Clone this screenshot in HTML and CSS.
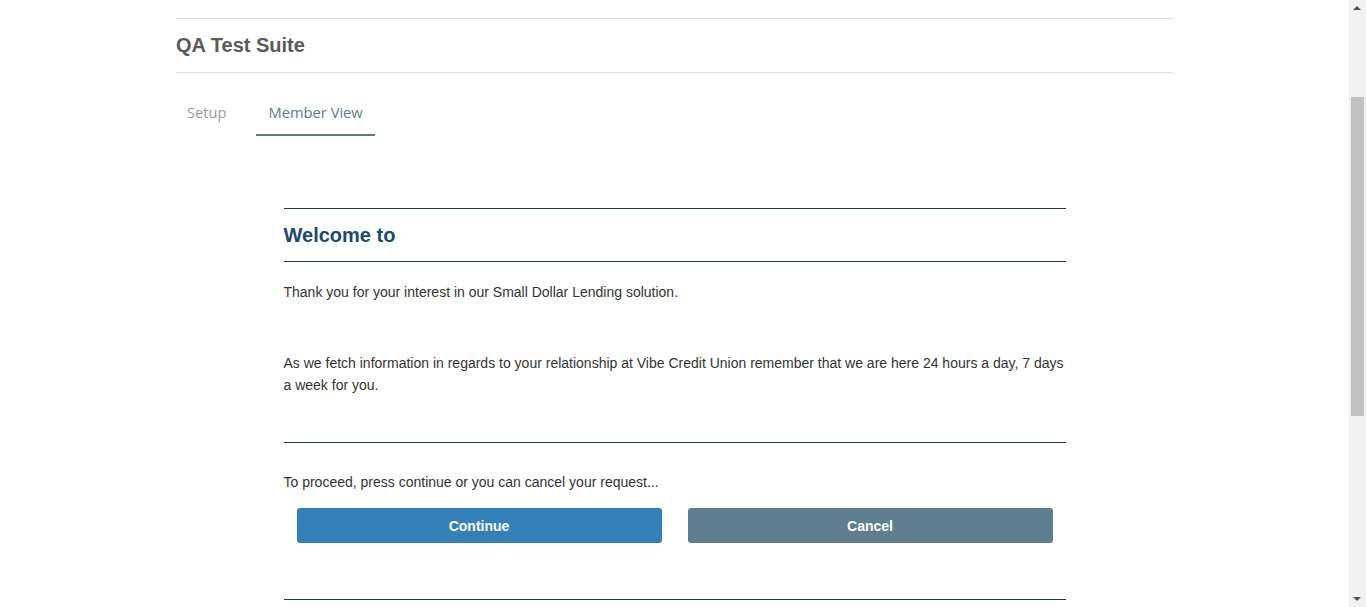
FILE: index.html
```html
<!DOCTYPE html>
<html>
<head>
<meta charset="utf-8">
<link rel="stylesheet" href="styles.css">
</head>
<body>
<div class="viewport">
  <main class="main">
    <div class="container">
      <div class="suite-header">
        <h1 class="suite-title">QA Test Suite</h1>
      </div>
      <nav class="tabs">
        <span class="tab">Setup</span>
        <span class="tab active">Member View</span>
      </nav>
      <section class="panel">
        <h2 class="welcome">Welcome to</h2>
        <p class="intro">Thank you for your interest in our Small Dollar Lending solution.</p>
        <p class="fetch">As we fetch information in regards to your relationship at Vibe Credit Union remember that we are here 24 hours a day, 7 days a week for you.</p>
        <div class="proceed">
          <p class="proceed-text">To proceed, press continue or you can cancel your request...</p>
          <div class="actions">
            <div class="action"><button class="btn btn-continue">Continue</button></div>
            <div class="action"><button class="btn btn-cancel">Cancel</button></div>
          </div>
        </div>
        <div class="panel-end"></div>
      </section>
    </div>
  </main>
  <div class="scrollbar">
    <div class="arrow arrow-up"></div>
    <div class="track"><div class="thumb"></div></div>
    <div class="arrow arrow-down"></div>
  </div>
</div>
</body>
</html>
```

FILE: styles.css
```css
* { box-sizing: border-box; }
html, body { margin: 0; padding: 0; height: 100%; overflow: hidden; background: #fff; }
body { font-family: "Liberation Sans", Arial, sans-serif; color: #333; }

.viewport { display: flex; height: 607px; }
.main { flex: 1; overflow: hidden; }

.container { width: 997px; margin: 18px auto 0; }

.suite-header {
  border-top: 1px solid #dddddd;
  border-bottom: 1px solid #dddddd;
  height: 55px;
  display: flex;
  align-items: center;
}
.suite-title {
  margin: 0;
  font-size: 20px;
  font-weight: bold;
  color: #5a5a5a;
}

.tabs { display: flex; gap: 18px; margin-top: 27px; }
.tab {
  font-family: "Open Sans", sans-serif;
  font-size: 14.7px;
  color: #9a9a9a;
  padding: 0 11px;
  height: 36px;
  line-height: 25px;
  border-bottom: 2px solid transparent;
}
.tab.active { color: #5e7a8d; border-bottom-color: #5a7a8c; padding: 0 12px 0 13px; }

.panel { width: 782px; margin: 72px auto 0; }
.welcome {
  margin: 0;
  border-top: 1px solid #1e3a4c;
  border-bottom: 1px solid #1e3a4c;
  height: 54px;
  display: flex;
  align-items: center;
  font-size: 20px;
  font-weight: bold;
  color: #1a4a70;
}
.intro, .fetch, .proceed-text {
  font-size: 14px;
  line-height: 22px;
  margin: 0;
  color: #333;
}
.intro { margin-top: 19px; }
.fetch { margin-top: 49px; }
.proceed { border-top: 1px solid #1e3a4c; margin-top: 46px; padding-top: 28px; }
.actions { display: grid; grid-template-columns: 1fr 1fr; margin-top: 15px; }
.action { padding: 0 13px; }
.btn {
  width: 100%;
  height: 35px;
  border: 0;
  border-radius: 3px;
  color: #fff;
  font-family: "Liberation Sans", Arial, sans-serif;
  font-size: 14px;
  font-weight: bold;
}
.btn-continue { background: #3380b8; }
.btn-cancel { background: #5e7f90; }
.panel-end { border-top: 1px solid #1e3a4c; margin-top: 56px; }

.scrollbar { width: 17px; background: #f1f1f1; display: flex; flex-direction: column; }
.arrow { height: 17px; position: relative; }
.arrow::after {
  content: "";
  position: absolute;
  left: 4px;
  border-left: 4px solid transparent;
  border-right: 4px solid transparent;
}
.arrow-up::after { top: 6px; border-bottom: 4px solid #505050; }
.arrow-down::after { top: 7px; border-top: 4px solid #505050; }
.track { flex: 1; padding: 80px 2px 0; }
.thumb { height: 319px; background: #c1c1c1; }
```
